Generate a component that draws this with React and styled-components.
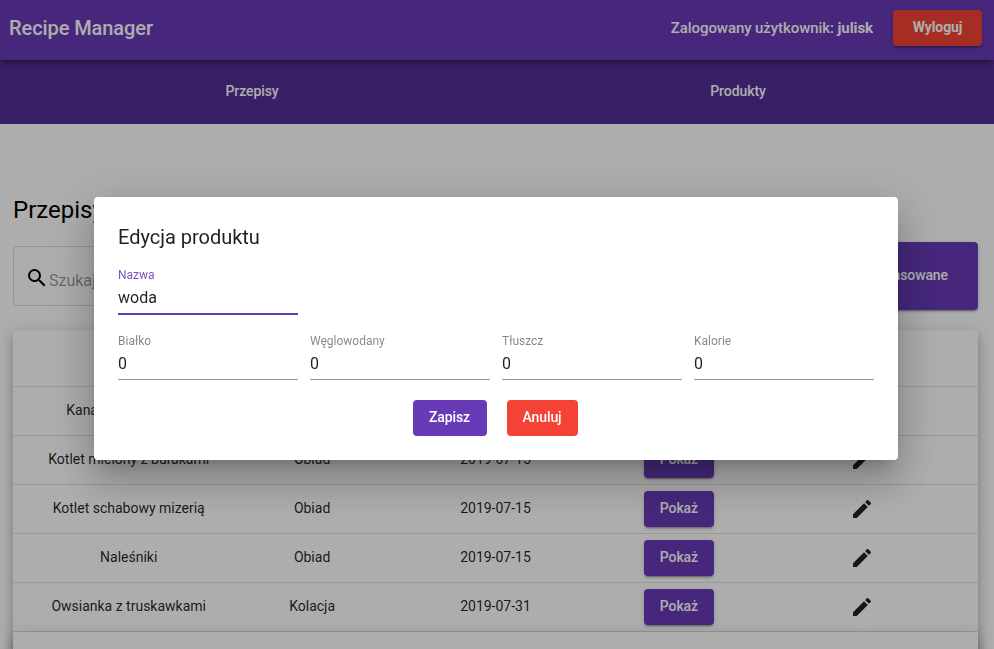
import React from "react";
import styled, { createGlobalStyle, css } from "styled-components";

const GlobalStyle = createGlobalStyle`
  *, *::before, *::after { box-sizing: border-box; }
  html, body { margin: 0; height: 100%; overflow: hidden; }
  body { font-family: Roboto, "Helvetica Neue", sans-serif; background: #fff; }
`;

const colors = { primary: "#673ab7", dark: "#542e96", warn: "#f44336" };

const elevation8 = css`
  box-shadow: 0 5px 5px -3px rgba(0, 0, 0, 0.2),
    0 8px 10px 1px rgba(0, 0, 0, 0.14), 0 3px 14px 2px rgba(0, 0, 0, 0.12);
`;

const raised = css`
  box-shadow: 0 3px 1px -2px rgba(0, 0, 0, 0.2),
    0 2px 2px 0 rgba(0, 0, 0, 0.14), 0 1px 5px 0 rgba(0, 0, 0, 0.12);
`;

const Page = styled.div`
  height: 649px;
  overflow: hidden;
`;

const Toolbar = styled.header`
  position: relative;
  z-index: 2;
  display: flex;
  align-items: center;
  height: 60px;
  padding: 0 12px 4px 9px;
  background: ${colors.primary};
  color: #fff;
  box-shadow: 0 4px 6px -2px rgba(0, 0, 0, 0.5);
`;

const Brand = styled.h1`
  flex: 1;
  margin: 0;
  font-size: 20px;
  line-height: 32px;
  font-weight: 500;
  letter-spacing: -0.08px;
`;

const UserInfo = styled.span`
  margin-right: 20px;
  font-size: 15px;
  line-height: 20px;
  font-weight: 500;
  letter-spacing: -0.08px;

  b { font-weight: 700; }
`;

const Button = styled.button`
  width: ${(p) => p.$width}px;
  height: ${(p) => p.$height || 36}px;
  padding: 0 0 2px;
  border: 0;
  border-radius: 4px;
  background: ${(p) => (p.$warn ? colors.warn : colors.primary)};
  color: #fff;
  font: ${(p) => (p.$bold ? 700 : 500)} 14px/34px Roboto, sans-serif;
  letter-spacing: -0.1px;
  white-space: nowrap;
  ${(p) => !p.$flat && raised}
`;

const Nav = styled.nav`
  display: grid;
  grid-template-columns: 1fr 1fr;
  align-items: center;
  height: 64px;
  padding: 0 13px 2px 9px;
  background: ${colors.dark};
  color: #fff;
  font-size: 14px;
  font-weight: 500;
  letter-spacing: -0.08px;
  text-align: center;
`;

const Content = styled.main`
  padding: 70px 16px 0 13px;
`;

const PageTitle = styled.h2`
  margin: 0;
  font-size: 24px;
  line-height: 32px;
  font-weight: 400;
`;

const Filters = styled.div`
  display: flex;
  justify-content: space-between;
  align-items: center;
  height: 68px;
  margin: 16px 0 20px;
`;

const SearchBox = styled.label`
  display: flex;
  align-items: center;
  width: 420px;
  height: 60px;
  padding: 2px 11px 0;
  border: 1px solid rgba(0, 0, 0, 0.14);
  border-radius: 4px;

  svg { flex: none; margin-top: 1px; }
  span {
    margin-top: 7px;
    font-size: 16px;
    line-height: 20px;
    color: rgba(0, 0, 0, 0.42);
  }
`;

const Table = styled.section`
  height: 380px;
  background: #fff;
  ${elevation8}
`;

const Row = styled.div`
  display: grid;
  grid-template-columns: repeat(5, 1fr);
  align-items: center;
  height: ${(p) => (p.$head ? 57 : 49)}px;
  padding: 0 24px;
  border-bottom: 1px solid rgba(0, 0, 0, 0.12);
  color: rgba(0, 0, 0, 0.87);
  font-size: 14px;
  text-align: center;
`;

const Cell = styled.div`
  display: flex;
  justify-content: center;
  align-items: center;
  white-space: nowrap;
`;

const Label = styled.span`
  padding-bottom: 2px;
`;

const EditButton = styled.button`
  position: relative;
  z-index: 1;
  display: flex;
  align-items: center;
  justify-content: center;
  width: 40px;
  height: 40px;
  padding: 0;
  border: 0;
  border-radius: 50%;
  background: #fff;
  color: rgba(0, 0, 0, 0.87);
`;

const Paginator = styled.footer`
  height: 56px;
  background: #fff;
  ${elevation8}
`;

const Backdrop = styled.div`
  position: fixed;
  inset: 0;
  z-index: 10;
  padding: 197px 96px 0 94px;
  background: rgba(0, 0, 0, 0.32);
`;

const Dialog = styled.form`
  height: 263px;
  padding: 24px;
  border-radius: 4px;
  background: #fff;
  color: rgba(0, 0, 0, 0.87);
  box-shadow: 0 11px 15px -7px rgba(0, 0, 0, 0.2),
    0 24px 38px 3px rgba(0, 0, 0, 0.14), 0 9px 46px 8px rgba(0, 0, 0, 0.12);
`;

const DialogTitle = styled.h3`
  margin: 0 0 14px;
  font-size: 20px;
  line-height: 32px;
  font-weight: 400;
  letter-spacing: -0.02px;
`;

const Fields = styled.div`
  display: flex;
  gap: 12px;
  height: 66px;
`;

const Field = styled.label`
  display: flex;
  flex-direction: column;
  width: 180px;
  height: ${(p) => (p.$focused ? 48 : 47)}px;
  border-bottom: ${(p) =>
    p.$focused ? `2px solid ${colors.primary}` : "1px solid rgba(0, 0, 0, 0.42)"};
`;

const FieldName = styled.span`
  font-size: 12px;
  line-height: 16px;
  color: ${(p) => (p.$focused ? "rgba(103, 58, 183, 0.87)" : "rgba(0, 0, 0, 0.48)")};
`;

const FieldInput = styled.input`
  width: 100%;
  height: 20px;
  margin-top: 5px;
  padding: 0;
  border: 0;
  outline: 0;
  background: none;
  color: rgba(0, 0, 0, 0.87);
  font: 400 16px/20px Roboto, sans-serif;
`;

const Actions = styled.div`
  display: flex;
  justify-content: center;
  gap: 20px;
  margin: 1px 2px 0 0;
`;

const SearchIcon = () => (
  <svg width="24" height="24" viewBox="0 0 24 24" fill="currentColor">
    <path d="M15.5 14h-.79l-.28-.27A6.471 6.471 0 0 0 16 9.5 6.5 6.5 0 1 0 9.5 16c1.61 0 3.09-.59 4.23-1.57l.27.28v.79l5 4.99L20.49 19l-4.99-5zm-6 0C7.01 14 5 11.99 5 9.5S7.01 5 9.5 5 14 7.01 14 9.5 11.99 14 9.5 14z" />
  </svg>
);

const EditIcon = () => (
  <svg width="24" height="24" viewBox="0 0 24 24" fill="currentColor">
    <path d="M3 17.25V21h3.75L17.81 9.94l-3.75-3.75L3 17.25zM20.71 7.04a.996.996 0 0 0 0-1.41l-2.34-2.34a.996.996 0 0 0-1.41 0l-1.83 1.83 3.75 3.75 1.83-1.83z" />
  </svg>
);

const recipes = [
  ["Kanapka z awokado", "Śniadanie", "2019-07-15"],
  ["Kotlet mielony z burakami", "Obiad", "2019-07-15"],
  ["Kotlet schabowy mizerią", "Obiad", "2019-07-15"],
  ["Naleśniki", "Obiad", "2019-07-15"],
  ["Owsianka z truskawkami", "Kolacja", "2019-07-31"],
];

const nutrients = ["Białko", "Węglowodany", "Tłuszcz", "Kalorie"];

export default function App() {
  return (
    <>
      <GlobalStyle />
      <Page>
        <Toolbar>
          <Brand>Recipe Manager</Brand>
          <UserInfo>
            Zalogowany użytkownik: <b>julisk</b>
          </UserInfo>
          <Button $width={89} $warn $bold>Wyloguj</Button>
        </Toolbar>
        <Nav>
          <span>Przepisy</span>
          <span>Produkty</span>
        </Nav>
        <Content>
          <PageTitle>Przepisy</PageTitle>
          <Filters>
            <SearchBox>
              <SearchIcon />
              <span>Szukaj</span>
            </SearchBox>
            <Button $width={150} $height={68}>Zbalansowane</Button>
          </Filters>
          <Table>
            <Row $head />
            {recipes.map(([name, category, date]) => (
              <Row key={name}>
                <Cell><Label>{name}</Label></Cell>
                <Cell><Label>{category}</Label></Cell>
                <Cell><Label>{date}</Label></Cell>
                <Cell><Button $width={70}>Pokaż</Button></Cell>
                <Cell>
                  <EditButton type="button" aria-label="Edytuj">
                    <EditIcon />
                  </EditButton>
                </Cell>
              </Row>
            ))}
            <Paginator />
          </Table>
        </Content>
      </Page>
      <Backdrop>
        <Dialog>
          <DialogTitle>Edycja produktu</DialogTitle>
          <Fields>
            <Field $focused>
              <FieldName $focused>Nazwa</FieldName>
              <FieldInput defaultValue="woda" />
            </Field>
          </Fields>
          <Fields>
            {nutrients.map((name) => (
              <Field key={name}>
                <FieldName>{name}</FieldName>
                <FieldInput defaultValue="0" />
              </Field>
            ))}
          </Fields>
          <Actions>
            <Button type="button" $width={74} $flat>Zapisz</Button>
            <Button type="button" $width={71} $warn $flat>Anuluj</Button>
          </Actions>
        </Dialog>
      </Backdrop>
    </>
  );
}
